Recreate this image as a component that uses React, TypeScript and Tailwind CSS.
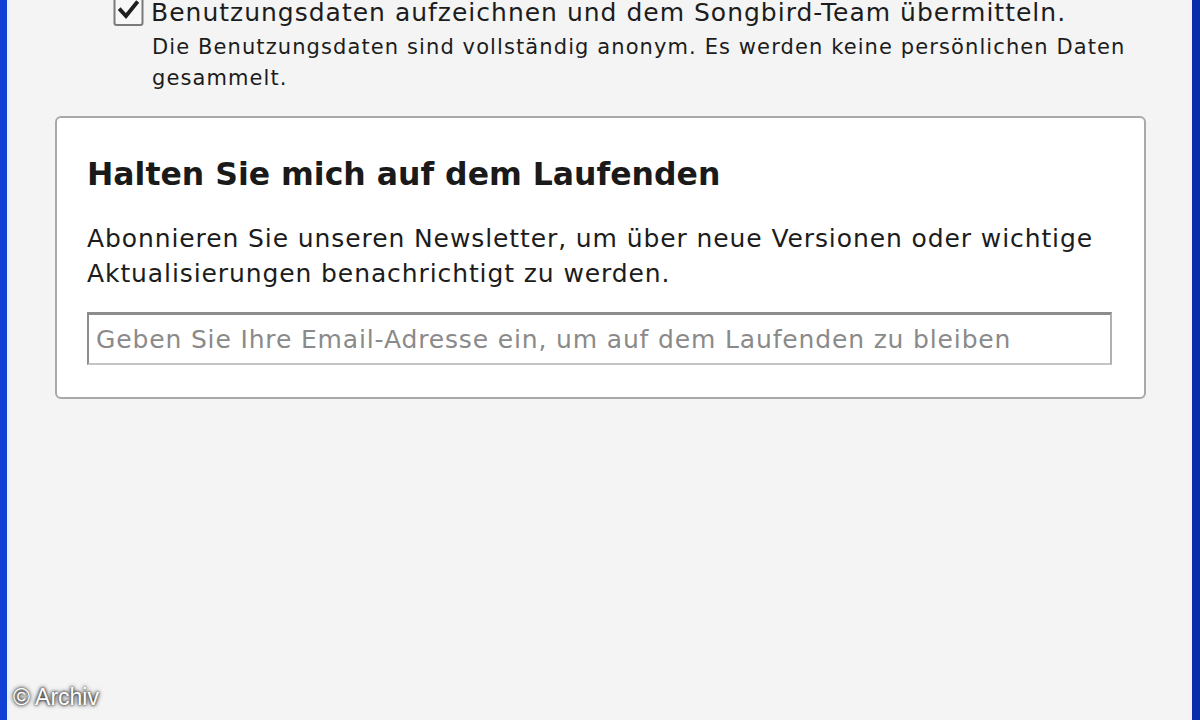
import React from "react";

const tahoma = { fontFamily: '"DejaVu Sans", Verdana, sans-serif' };

function CheckMark() {
  return (
    <svg viewBox="0 0 30 30" className="h-[30px] w-[31px] shrink-0">
      <rect x="1" y="1" width="28" height="28" rx="2" fill="#f7f7f7" stroke="#7a7a7a" strokeWidth="2" />
      <path d="M7 14 L12.5 20 L23 7" fill="none" stroke="#1e1e1e" strokeWidth="3.8" strokeLinecap="square" />
    </svg>
  );
}

export default function App() {
  return (
    <div className="flex h-[720px] w-[1200px] overflow-hidden bg-[#f4f4f4]" style={tahoma}>
      <div className="w-[7px] bg-[#1240d4]" />
      <div className="w-[3px] bg-[#e8f4ff]" />

      <main className="relative flex-1">
        <div className="mt-[-4px] flex items-start gap-[7px] pl-[103px]">
          <CheckMark />
          <div className="pt-[3px]">
            <div className="text-[25px] leading-[28px] tracking-[1px] text-[#1c1c1c]">
              Benutzungsdaten aufzeichnen und dem Songbird-Team übermitteln.
            </div>
            <div className="mt-[5px] pl-[1px] text-[21px] leading-[31px] tracking-[1.1px] text-[#1c1c1c]">
              Die Benutzungsdaten sind vollständig anonym. Es werden keine persönlichen Daten
              <br />
              gesammelt.
            </div>
          </div>
        </div>

        <section className="ml-[45px] mt-[22px] w-[1091px] rounded-[6px] border-2 border-[#a9a9a9] bg-white px-[30px] pb-[32px] pt-[37px]">
          <h2 className="text-[31.5px] font-bold leading-[38px] text-[#1a1a1a]">
            Halten Sie mich auf dem Laufenden
          </h2>
          <p className="mt-[28px] text-[25px] leading-[35px] tracking-[0.9px] text-[#1c1c1c]">
            Abonnieren Sie unseren Newsletter, um über neue Versionen oder wichtige
            <br />
            Aktualisierungen benachrichtigt zu werden.
          </p>
          <input
            type="text"
            placeholder="Geben Sie Ihre Email-Adresse ein, um auf dem Laufenden zu bleiben"
            className="mt-[21px] block h-[53px] w-[1025px] border-2 border-t-[3px] border-[#8c8c8c] border-r-[#b0b0b0] border-b-[#c4c4c4] bg-white px-[7px] text-[25px] tracking-[0.85px] text-[#1c1c1c] outline-none placeholder:text-[#8a8a8a]"
            style={tahoma}
          />
        </section>

        <span
          className="absolute bottom-[6px] left-[3px] text-[23px] text-white"
          style={{ fontFamily: '"Liberation Sans", Arial, sans-serif', textShadow: "0 0 3px #000, 0 0 5px #333" }}
        >
          © Archiv
        </span>
      </main>

      <div className="w-[4px] bg-[#faf0f4]" />
      <div className="w-[8px] bg-[#0b2fa8]" />
    </div>
  );
}
